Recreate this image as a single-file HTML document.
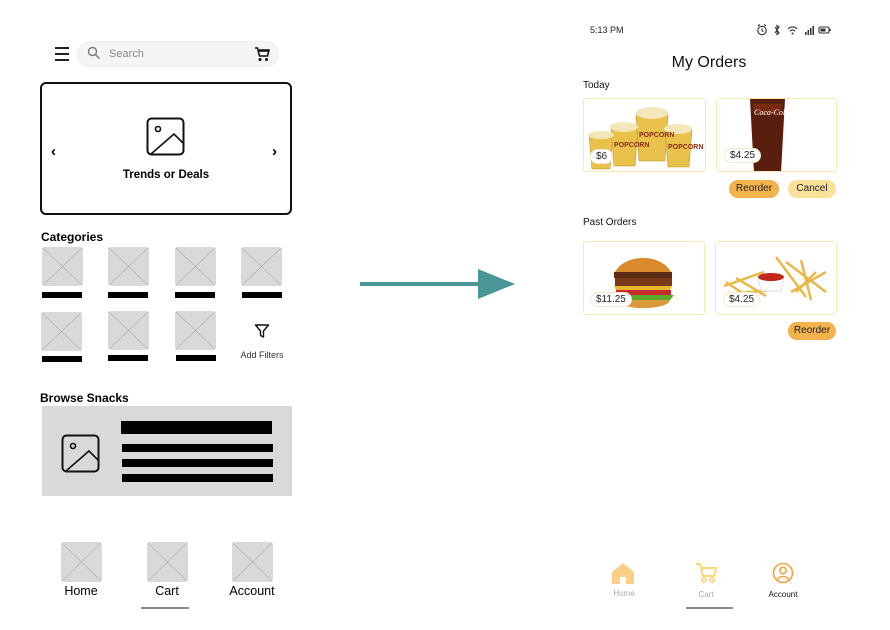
<!DOCTYPE html>
<html><head><meta charset="utf-8"><style>
*{margin:0;padding:0;box-sizing:border-box}
body{width:890px;height:630px;background:#fff;position:relative;overflow:hidden;font-family:"Liberation Sans",sans-serif;color:#000}
.a{position:absolute}
.ph{position:absolute;background:#d9d9d9;border-radius:3px;overflow:hidden}
.ph svg{width:100%;height:100%;display:block}
.bar{position:absolute;background:#000}
.lbl{position:absolute;font-weight:bold;font-size:12px}
.card{position:absolute;border:1px solid #fbe6b5;border-radius:3px;overflow:hidden;background:#fff}
.price{position:absolute;background:#fff;border:1px solid #f6e8c8;border-radius:9px;font-size:10px;padding:1px 5px;color:#222}
.btn{position:absolute;border-radius:9px;font-size:10px;text-align:center;height:18px;line-height:18px;color:#222}
</style></head><body>
<!-- LEFT -->
<div class="a" style="left:55px;top:47px;width:14px;height:2px;background:#222"></div>
<div class="a" style="left:55px;top:53px;width:14px;height:2px;background:#222"></div>
<div class="a" style="left:55px;top:59px;width:14px;height:2px;background:#222"></div>
<div class="a" style="left:77px;top:41px;width:202px;height:26px;background:#f5f5f5;border-radius:13px;border:1px solid #eee"></div>
<svg class="a" style="left:87px;top:46px" width="14" height="14" viewBox="0 0 14 14"><circle cx="5.5" cy="5.5" r="4" fill="none" stroke="#777" stroke-width="1.4"/><line x1="8.5" y1="8.5" x2="12.5" y2="12.5" stroke="#777" stroke-width="1.4"/></svg>
<div class="a" style="left:109px;top:48px;font-size:11px;color:#888">Search</div>
<svg class="a" style="left:254px;top:46px" width="16" height="16" viewBox="0 0 16 16"><path d="M1 2h2.5l2 8h8l1.5-6H5" fill="none" stroke="#111" stroke-width="1.6"/><path d="M5 5h9" stroke="#111" stroke-width="1.6"/><circle cx="6" cy="13.5" r="1.5" fill="#111"/><circle cx="12.5" cy="13.5" r="1.5" fill="#111"/></svg>
<div class="a" style="left:40px;top:82px;width:252px;height:133px;border:2px solid #111;border-radius:6px"></div>
<svg class="a" style="left:146px;top:117px" width="40" height="40" viewBox="0 0 40 40"><rect x="1.5" y="1.5" width="36" height="36" rx="4" fill="none" stroke="#111" stroke-width="2"/><circle cx="12" cy="12" r="2.5" fill="none" stroke="#111" stroke-width="1.6"/><path d="M5 37L28 17L37 26" fill="none" stroke="#111" stroke-width="1.6"/></svg>
<div class="a" style="left:51px;top:143px;font-size:15px;font-weight:bold">‹</div>
<div class="a" style="left:272px;top:143px;font-size:15px;font-weight:bold">›</div>
<div class="a" style="left:40px;top:169px;width:252px;text-align:center;font-size:11.5px;font-weight:bold">Trends or Deals</div>
<div class="lbl" style="left:41px;top:230px">Categories</div>
<div class="ph" style="left:42px;top:247px;width:41px;height:39px"><svg viewBox="0 0 41 39" preserveAspectRatio="none"><path d="M0 0L41 39M41 0L0 39" stroke="#aaa" stroke-width=".6"/></svg></div>
<div class="ph" style="left:108px;top:247px;width:41px;height:39px"><svg viewBox="0 0 41 39" preserveAspectRatio="none"><path d="M0 0L41 39M41 0L0 39" stroke="#aaa" stroke-width=".6"/></svg></div>
<div class="ph" style="left:175px;top:247px;width:41px;height:39px"><svg viewBox="0 0 41 39" preserveAspectRatio="none"><path d="M0 0L41 39M41 0L0 39" stroke="#aaa" stroke-width=".6"/></svg></div>
<div class="ph" style="left:241px;top:247px;width:41px;height:39px"><svg viewBox="0 0 41 39" preserveAspectRatio="none"><path d="M0 0L41 39M41 0L0 39" stroke="#aaa" stroke-width=".6"/></svg></div>
<div class="bar" style="left:42px;top:292px;width:40px;height:6px"></div>
<div class="bar" style="left:108px;top:292px;width:40px;height:6px"></div>
<div class="bar" style="left:175px;top:292px;width:40px;height:6px"></div>
<div class="bar" style="left:242px;top:292px;width:40px;height:6px"></div>
<div class="ph" style="left:41px;top:312px;width:41px;height:39px"><svg viewBox="0 0 41 39" preserveAspectRatio="none"><path d="M0 0L41 39M41 0L0 39" stroke="#aaa" stroke-width=".6"/></svg></div>
<div class="ph" style="left:108px;top:311px;width:41px;height:39px"><svg viewBox="0 0 41 39" preserveAspectRatio="none"><path d="M0 0L41 39M41 0L0 39" stroke="#aaa" stroke-width=".6"/></svg></div>
<div class="ph" style="left:175px;top:311px;width:41px;height:39px"><svg viewBox="0 0 41 39" preserveAspectRatio="none"><path d="M0 0L41 39M41 0L0 39" stroke="#aaa" stroke-width=".6"/></svg></div>
<div class="bar" style="left:42px;top:356px;width:40px;height:6px"></div>
<div class="bar" style="left:108px;top:355px;width:40px;height:6px"></div>
<div class="bar" style="left:176px;top:355px;width:40px;height:6px"></div>
<svg class="a" style="left:254px;top:323px" width="16" height="16" viewBox="0 0 16 16"><path d="M1.5 2h13L9.5 8v6l-3-1.5V8z" fill="none" stroke="#111" stroke-width="1.4" stroke-linejoin="round"/></svg>
<div class="a" style="left:232px;top:350px;width:60px;text-align:center;font-size:9px;color:#333">Add Filters</div>
<div class="lbl" style="left:40px;top:391px">Browse Snacks</div>
<div class="a" style="left:42px;top:406px;width:250px;height:90px;background:#d9d9d9"></div>
<svg class="a" style="left:61px;top:434px" width="40" height="40" viewBox="0 0 40 40"><rect x="1.5" y="1.5" width="36" height="36" rx="4" fill="none" stroke="#111" stroke-width="2"/><circle cx="12" cy="12" r="2.5" fill="none" stroke="#111" stroke-width="1.6"/><path d="M5 37L28 17L37 26" fill="none" stroke="#111" stroke-width="1.6"/></svg>
<div class="bar" style="left:121px;top:421px;width:151px;height:13px"></div>
<div class="bar" style="left:122px;top:444px;width:151px;height:8px"></div>
<div class="bar" style="left:122px;top:459px;width:151px;height:8px"></div>
<div class="bar" style="left:122px;top:474px;width:151px;height:8px"></div>
<div class="ph" style="left:61px;top:542px;width:41px;height:40px"><svg viewBox="0 0 41 40" preserveAspectRatio="none"><path d="M0 0L41 40M41 0L0 40" stroke="#aaa" stroke-width=".6"/></svg></div>
<div class="ph" style="left:147px;top:542px;width:41px;height:40px"><svg viewBox="0 0 41 40" preserveAspectRatio="none"><path d="M0 0L41 40M41 0L0 40" stroke="#aaa" stroke-width=".6"/></svg></div>
<div class="ph" style="left:232px;top:542px;width:41px;height:40px"><svg viewBox="0 0 41 40" preserveAspectRatio="none"><path d="M0 0L41 40M41 0L0 40" stroke="#aaa" stroke-width=".6"/></svg></div>
<div class="a" style="left:51px;top:584px;width:60px;text-align:center;font-size:12.5px">Home</div>
<div class="a" style="left:137px;top:584px;width:60px;text-align:center;font-size:12.5px">Cart</div>
<div class="a" style="left:222px;top:584px;width:60px;text-align:center;font-size:12.5px">Account</div>
<div class="a" style="left:141px;top:607px;width:48px;height:2px;background:#888"></div>
<!-- ARROW -->
<div class="a" style="left:360px;top:282px;width:122px;height:4px;background:#4a9696"></div>
<svg class="a" style="left:478px;top:269px" width="38" height="30" viewBox="0 0 38 30"><path d="M0 0L37 15L0 30z" fill="#4a9696"/></svg>
<!-- RIGHT -->
<div class="a" style="left:590px;top:25px;font-size:9px;color:#222">5:13 PM</div>
<svg class="a" style="left:756px;top:24px" width="76" height="12" viewBox="0 0 76 12"><g fill="none" stroke="#333" stroke-width="1.1"><circle cx="6" cy="6.5" r="4.2"/><path d="M6 4.5v2.2l1.5 1M2 2l2-1.5M10 2L8 .5"/><path d="M19 3l4 6-2 1.5V1.5l2 1.5-4 6"/><path d="M32 5a6 6 0 0 1 9 0M34 7.3a3 3 0 0 1 5 0"/><rect x="63" y="3" width="10" height="6" rx="1.5"/></g><circle cx="36.5" cy="9.5" r="1" fill="#333"/><g fill="#333"><rect x="49" y="8" width="1.5" height="3"/><rect x="51.5" y="6" width="1.5" height="5"/><rect x="54" y="4" width="1.5" height="7"/><rect x="56.5" y="2" width="1.5" height="9"/><rect x="64.5" y="4.5" width="5" height="3"/><rect x="73.5" y="5" width="1.2" height="2"/></g></svg>
<div class="a" style="left:620px;top:54px;width:178px;text-align:center;font-size:16px;color:#111">My Orders</div>
<div class="a" style="left:583px;top:80px;font-size:10px;color:#111">Today</div>
<div class="card" style="left:583px;top:98px;width:123px;height:74px"><svg width="123" height="74" viewBox="0 0 123 74"><g fill="#e8c24a" stroke="#b89020" stroke-width=".5"><path d="M5 37h24l-3 33h-18z"/><path d="M27 29h27l-3 38h-21z"/><path d="M52 16h32l-3 46h-26z"/><path d="M81 31h27l-3 37h-21z"/></g><g fill="#f3e6b8"><ellipse cx="17" cy="36" rx="13" ry="4"/><ellipse cx="40" cy="28" rx="14" ry="5"/><ellipse cx="68" cy="14" rx="16" ry="6"/><ellipse cx="94" cy="30" rx="14" ry="5"/></g><g fill="#8a2a1a" font-size="7" font-weight="bold" font-family="Liberation Sans"><text x="30" y="48">POPCORN</text><text x="55" y="38">POPCORN</text><text x="84" y="50">POPCORN</text></g></svg></div>
<div class="price" style="left:590px;top:149px">$6</div>
<div class="card" style="left:716px;top:98px;width:121px;height:74px"><svg width="121" height="74" viewBox="0 0 121 74"><path d="M33 0h35l-4 74h-27z" fill="#5a1e0e"/><path d="M36 5h29l-1 10h-27z" fill="#7a2a14"/><text x="37" y="16" font-size="8" fill="#fff" font-style="italic" font-family="Liberation Serif">Coca-Cola</text></svg></div>
<div class="price" style="left:724px;top:148px">$4.25</div>
<div class="btn" style="left:729px;top:180px;width:50px;background:#f2b34c">Reorder</div>
<div class="btn" style="left:788px;top:180px;width:48px;background:#fbe09a">Cancel</div>
<div class="a" style="left:583px;top:217px;font-size:10px;color:#111">Past Orders</div>
<div class="card" style="left:583px;top:241px;width:122px;height:74px"><svg width="122" height="74" viewBox="0 0 122 74"><path d="M31 30a30 22 0 0 1 56 0z" fill="#d98a2a"/><rect x="30" y="30" width="58" height="6" fill="#5a2a14"/><rect x="31" y="36" width="57" height="8" fill="#7a3a1a"/><path d="M30 44h58l-2 4h-54z" fill="#e8b828"/><rect x="32" y="48" width="55" height="5" fill="#c82a2a"/><path d="M28 53h62l-4 5h-54z" fill="#5aa82a"/><path d="M33 58h53a26 8 0 0 1-53 0z" fill="#d89a3a"/></svg></div>
<div class="price" style="left:590px;top:292px">$11.25</div>
<div class="card" style="left:715px;top:241px;width:122px;height:74px"><svg width="122" height="74" viewBox="0 0 122 74"><g stroke="#e8b848" stroke-width="2.5"><path d="M8 44l40-14M12 52l45-4M20 36l30 18M70 20l40 30M75 50l35-20M85 18l10 40M60 15l30 40M100 30l-20 20M10 40l30 20"/></g><path d="M42 35h26l-3 14h-20z" fill="#fff" stroke="#ddd"/><ellipse cx="55" cy="35" rx="13" ry="4" fill="#c0261a"/></svg></div>
<div class="price" style="left:723px;top:292px">$4.25</div>
<div class="btn" style="left:788px;top:322px;width:48px;background:#f2b34c">Reorder</div>
<svg class="a" style="left:611px;top:562px" width="24" height="22" viewBox="0 0 24 22"><path d="M12 1L1 10v12h8v-7h6v7h8V10z" fill="#fbcf86"/></svg>
<div class="a" style="left:594px;top:589px;width:60px;text-align:center;font-size:8px;color:#aaa">Home</div>
<svg class="a" style="left:695px;top:562px" width="22" height="22" viewBox="0 0 22 22"><path d="M1 2h4l3 12h11l2-8H6" fill="none" stroke="#fcd67a" stroke-width="2"/><circle cx="9" cy="18" r="2" fill="none" stroke="#fcd67a" stroke-width="1.8"/><circle cx="17" cy="18" r="2" fill="none" stroke="#fcd67a" stroke-width="1.8"/></svg>
<div class="a" style="left:676px;top:590px;width:60px;text-align:center;font-size:8px;color:#aaa">Cart</div>
<div class="a" style="left:686px;top:607px;width:47px;height:2px;background:#888"></div>
<svg class="a" style="left:772px;top:562px" width="22" height="22" viewBox="0 0 22 22"><circle cx="11" cy="11" r="9.5" fill="none" stroke="#f2a340" stroke-width="1.6"/><circle cx="11" cy="8.5" r="3.2" fill="none" stroke="#f2a340" stroke-width="1.6"/><path d="M5 17.5c3-4 9-4 12 0" fill="none" stroke="#f2a340" stroke-width="1.6"/></svg>
<div class="a" style="left:753px;top:590px;width:60px;text-align:center;font-size:8px;color:#111">Account</div>
</body></html>
